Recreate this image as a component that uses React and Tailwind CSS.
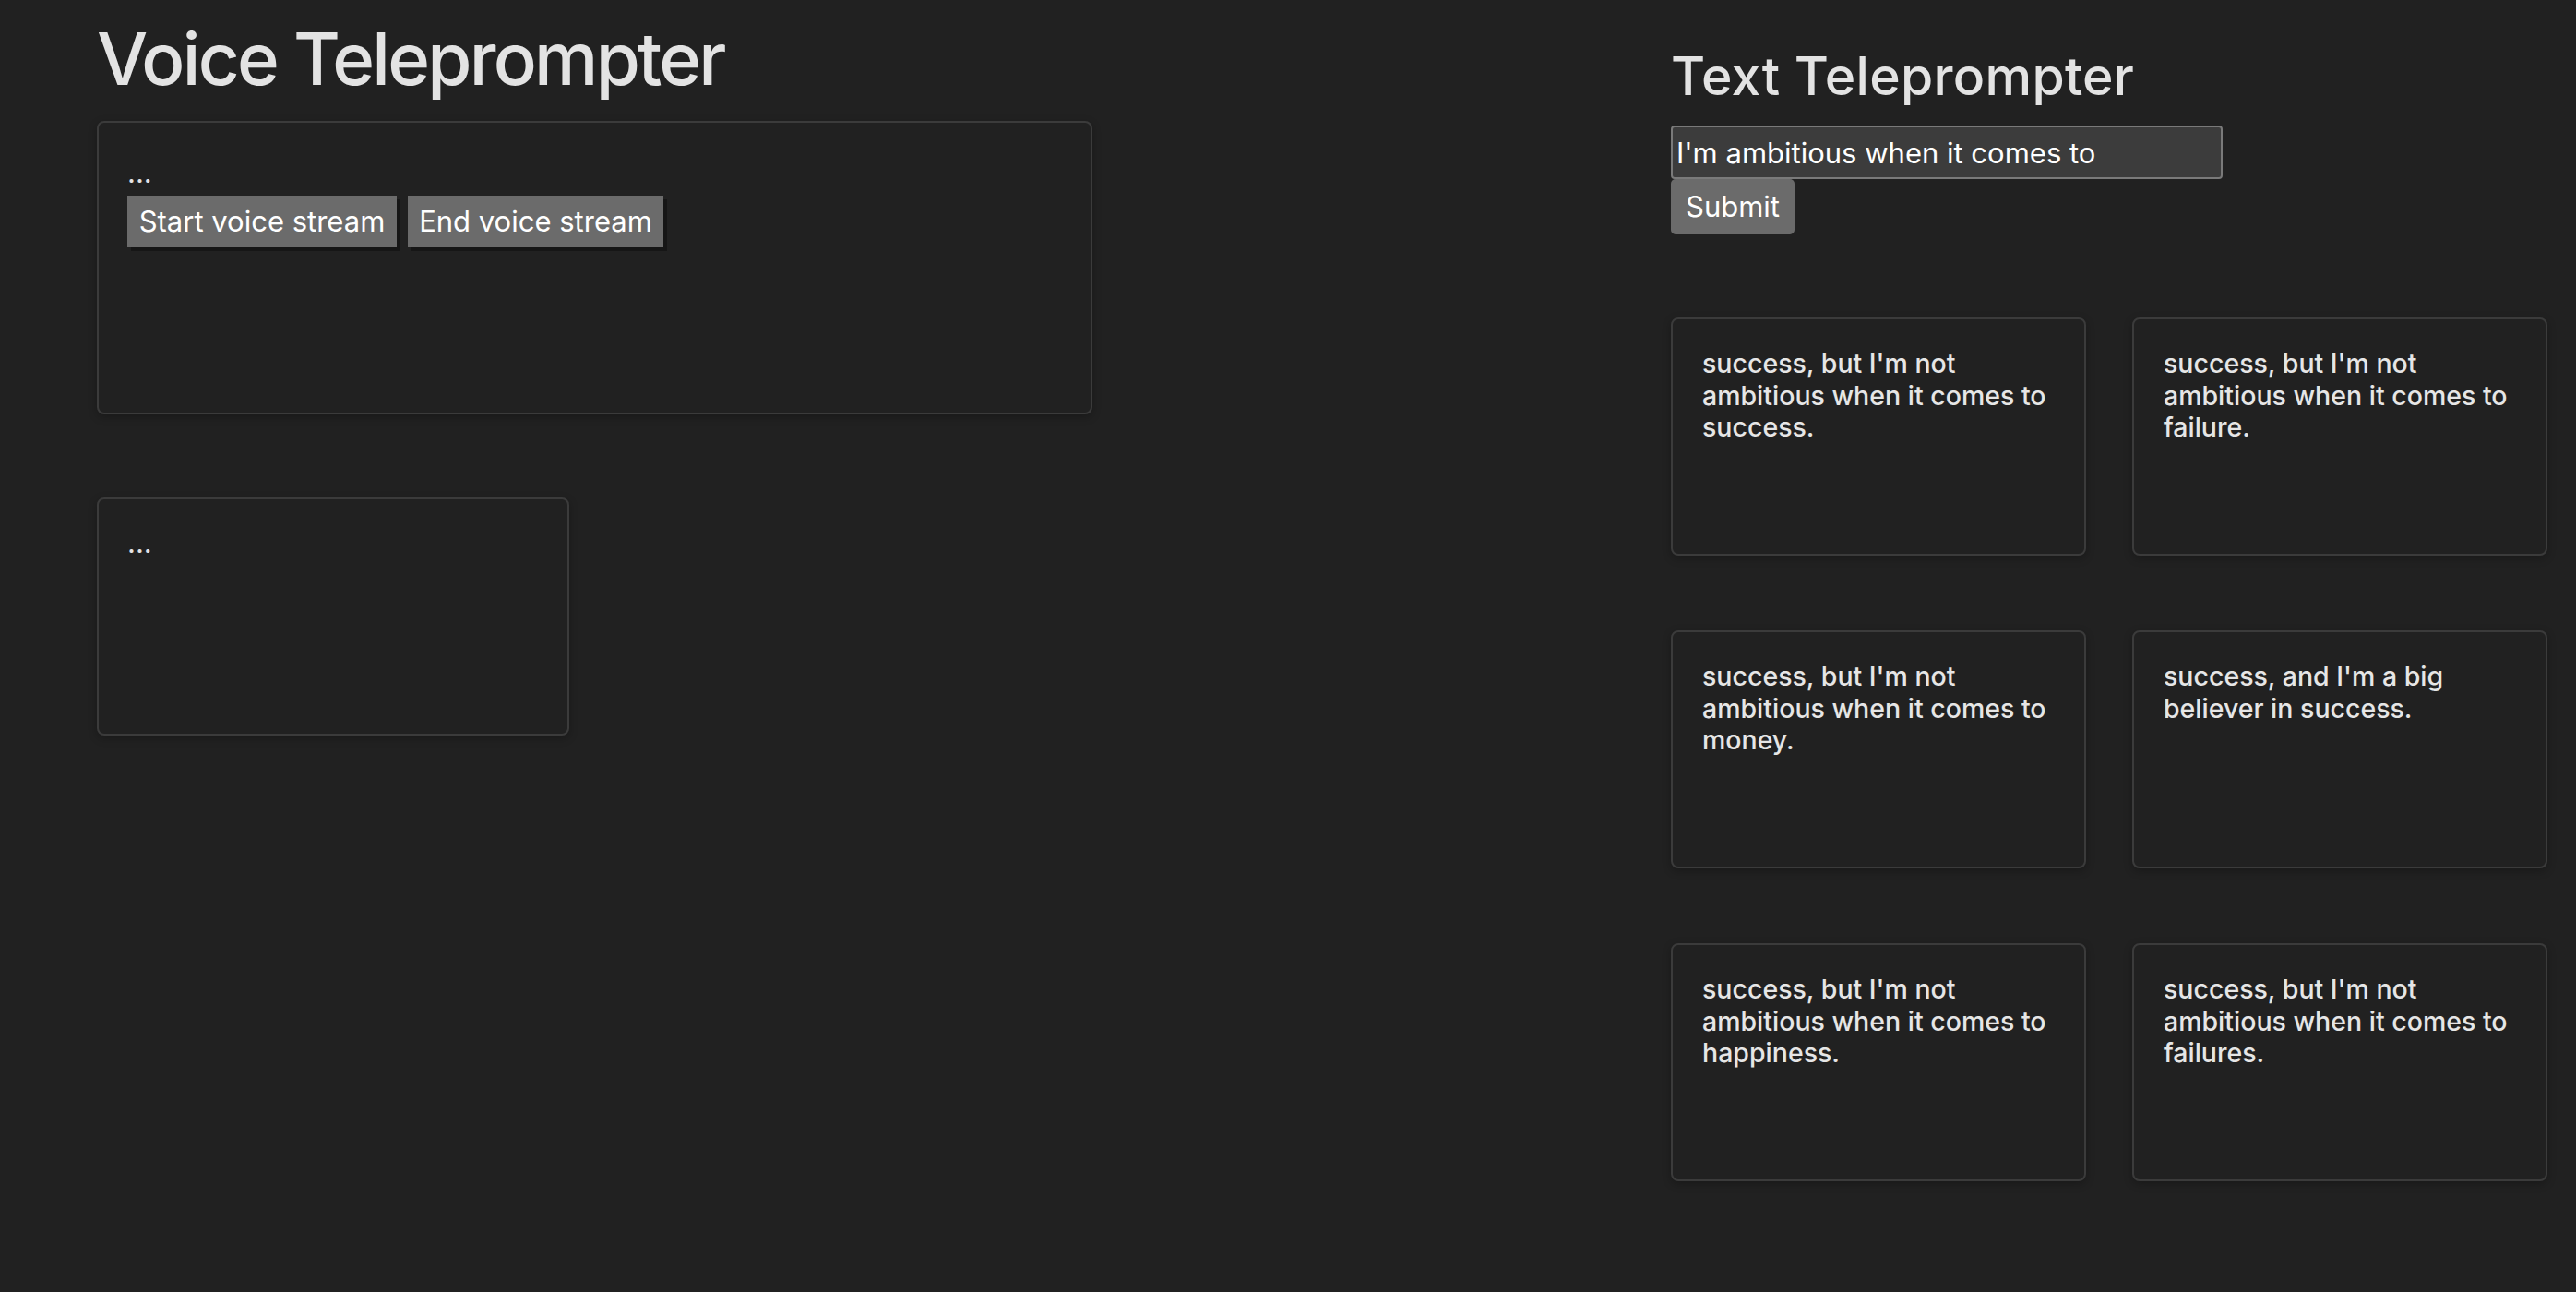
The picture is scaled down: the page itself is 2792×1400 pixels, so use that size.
const RESULTS = [
  "success, but I'm not ambitious when it comes to success.",
  "success, but I'm not ambitious when it comes to failure.",
  "success, but I'm not ambitious when it comes to money.",
  "success, and I'm a big believer in success.",
  "success, but I'm not ambitious when it comes to happiness.",
  "success, but I'm not ambitious when it comes to failures.",
]

function StreamButton({ children, width }) {
  return (
    <button
      className={`h-[56px] ${width} bg-[#6b6b6b] text-[31px] text-white shadow-[4px_4px_0_#161616]`}
    >
      {children}
    </button>
  )
}

export default function App() {
  return (
    <div className="min-h-screen bg-[#212121] font-[Inter,sans-serif] text-[#e3e3e3] flex pl-[105px]">
      {/* Voice */}
      <section className="w-[1706px] shrink-0">
        <h1 className="mt-[25px] text-[78px] leading-none font-medium tracking-[-0.035em]">Voice Teleprompter</h1>

        <div className="mt-[28px] w-[1079px] h-[318px] rounded-lg border-2 border-[#3b3b3b] pt-[35px] px-[31px] shadow-[0_3px_10px_rgba(0,0,0,0.25)]">
          <p className="text-[31px] leading-[38px]">...</p>
          <div className="mt-[6px] flex gap-[12px]">
            <StreamButton width="w-[292px]">Start voice stream</StreamButton>
            <StreamButton width="w-[277px]">End voice stream</StreamButton>
          </div>
        </div>

        <div className="mt-[90px] w-[512px] h-[258px] rounded-lg border-2 border-[#3b3b3b] pt-[28px] px-[31px] shadow-[0_3px_10px_rgba(0,0,0,0.25)]">
          <p className="text-[31px] leading-[38px]">...</p>
        </div>
      </section>

      {/* Text */}
      <section className="w-[951px] shrink-0">
        <h2 className="mt-[54px] text-[57px] leading-none font-medium tracking-[0.005em]">Text Teleprompter</h2>

        <form className="mt-[25px] flex flex-col items-start" onSubmit={e => e.preventDefault()}>
          <input
            className="w-[598px] h-[58px] border-2 border-[#7a7a7a] rounded-[4px] bg-[#3c3c3c] pl-[4px] text-[31px] text-white outline-none"
            defaultValue="I'm ambitious when it comes to"
          />
          <button className="h-[60px] px-[16px] rounded-[5px] bg-[#6b6b6b] text-[31px] text-white">Submit</button>
        </form>

        <div className="mt-[90px] grid grid-cols-[450px_450px] gap-x-[50px] gap-y-[81px]">
          {RESULTS.map((r, i) => (
            <div
              key={i}
              className="h-[258px] rounded-lg border-2 border-[#3b3b3b] pt-[31px] pl-[32px] pr-[20px] text-[28.5px] leading-[34.5px] font-medium text-[#e6e6e6] shadow-[0_3px_10px_rgba(0,0,0,0.25)]"
            >
              {r}
            </div>
          ))}
        </div>
      </section>
    </div>
  )
}
